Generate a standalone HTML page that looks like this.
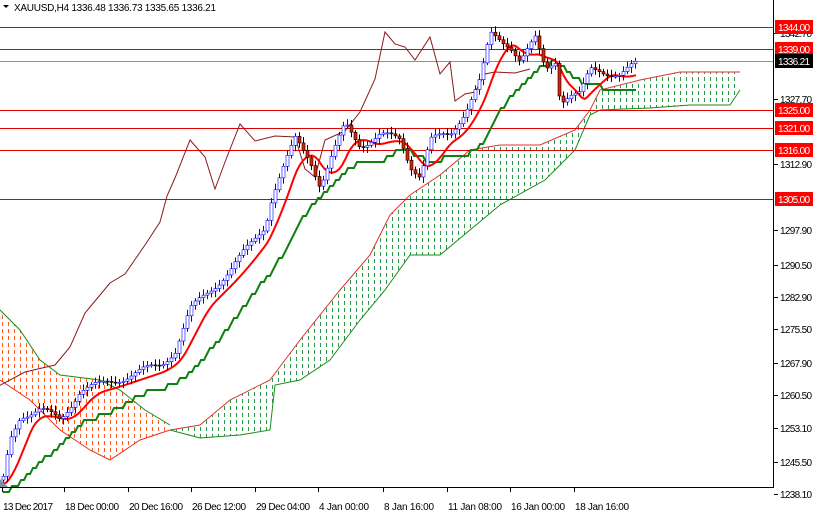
<!DOCTYPE html>
<html><head><meta charset="utf-8"><style>
body{margin:0;background:#fff;}
svg{display:block;font-family:"Liberation Sans",sans-serif;}
</style></head><body>
<svg id="s" width="814" height="514" xmlns="http://www.w3.org/2000/svg">
<defs>
<pattern id="pg" width="6" height="7" patternUnits="userSpaceOnUse"><line x1="2.5" y1="0" x2="2.5" y2="4" stroke="#2a9a4a" stroke-width="1"/></pattern>
<pattern id="po" width="6" height="7" patternUnits="userSpaceOnUse"><line x1="2.5" y1="0" x2="2.5" y2="4" stroke="#ff5a1a" stroke-width="1"/></pattern>
</defs>
<rect width="814" height="514" fill="#fff"/>
<g id="cloud"></g>
<g id="lines"></g>
<g id="candles"></g>
<line x1="773.5" y1="0" x2="773.5" y2="487" stroke="#000"/>
<line x1="0" y1="487.5" x2="774" y2="487.5" stroke="#000"/>
<g id="axis" font-size="10" fill="#000"></g>
<text x="14" y="11" font-size="10" textLength="202">XAUUSD,H4  1336.48 1336.73 1335.65 1336.21</text>
<path d="M3 5 L9 5 L6 8 Z" fill="#000"/>
<path d="M0 487 L8 487 L0 479Z" fill="#8090a0"/>
</svg>
<script>
var S=document.getElementById('s'),NS='http://www.w3.org/2000/svg';
function el(p,t,a,txt){var e=document.createElementNS(NS,t);for(var k in a)e.setAttribute(k,a[k]);if(txt)e.textContent=txt;document.getElementById(p).appendChild(e);return e;}
function pts(a){return a.map(function(p){return p.join(',')}).join(' ');}
var gu=[[170,430],[200,425],[230,400],[270,380],[300,340],[340,290],[370,255],[390,215],[410,195],[440,175],[470,150],[500,145],[540,145],[575,130],[590,110],[600,90],[640,80],[680,72],[740,72]];
var gl=[[740,90],[730,105],[690,105],[650,108],[600,110],[590,115],[575,150],[545,180],[500,205],[470,230],[440,255],[410,255],[385,290],[360,320],[330,360],[300,380],[275,385],[270,430],[240,435],[200,438],[170,430]];
el('cloud','polygon',{points:pts(gu.concat(gl)),fill:'url(#pg)'});
el('cloud','polyline',{points:pts(gu),fill:'none',stroke:'#e03030','stroke-width':1});
el('cloud','polyline',{points:pts(gl),fill:'none',stroke:'#1a8a1a','stroke-width':1});
var ou=[[0,310],[20,330],[40,360],[60,375],[100,380],[120,390],[145,410],[170,425]];
var ol=[[170,430],[140,440],[110,460],[90,450],[60,430],[30,400],[0,380]];
el('cloud','polygon',{points:pts(ou.concat(ol)),fill:'url(#po)'});
el('cloud','polyline',{points:pts(ou),fill:'none',stroke:'#1a8a1a','stroke-width':1});
el('cloud','polyline',{points:pts(ol),fill:'none',stroke:'#e03030','stroke-width':1});
[27,49,110,128,150,199].forEach(function(y){el('lines','line',{x1:0,y1:y+.5,x2:774,y2:y+.5,stroke:'#e00000'});});
el('lines','line',{x1:0,y1:61.5,x2:774,y2:61.5,stroke:'#909090'});
var P=[[3,480],[10,440],[20,415],[40,410],[60,420],[80,390],[100,385],[130,375],[160,365],[175,350],[190,310],[200,300],[215,285],[230,270],[250,245],[265,225],[272,195],[280,175],[295,140],[310,160],[320,185],[330,160],[345,125],[360,145],[380,135],[400,140],[410,165],[420,175],[430,140],[450,135],[465,110],[480,80],[490,35],[500,40],[510,45],[520,60],[535,40],[545,70],[555,60],[560,100],[570,95],[580,95],[590,70],[600,70],[620,75],[635,65]];
function at(x){for(var i=1;i<P.length;i++)if(x<=P[i][0]){var a=P[i-1],b=P[i];return a[1]+(b[1]-a[1])*(x-a[0])/(b[0]-a[0]);}return P[P.length-1][1];}
el('lines','polyline',{points:pts(P.map(function(p){return [p[0]-105,p[1]+((p[0]*7)%9-4)]}).filter(function(p){return p[0]>-10})),fill:'none',stroke:'#8b1a1a','stroke-width':1});
var t=[],k=[];
for(var x=3;x<=636;x+=3){var s=0,n=0;for(var j=x-25;j<=x;j+=3){s+=at(Math.max(3,j));n++;}t.push([x,s/n+4]);var s2=0,n2=0;for(var j=x-70;j<=x;j+=3){s2+=at(Math.max(3,j));n2++;}k.push([x,Math.round((s2/n2+12)/6)*6]);}
el('lines','polyline',{points:pts(k),fill:'none',stroke:'#108010','stroke-width':2});
el('lines','polyline',{points:pts(t),fill:'none',stroke:'#f00','stroke-width':2});
var prev=at(3);
for(var x=3;x<=636;x+=4){var c=at(x)+Math.sin(x*1.7)*4,o=prev,h=Math.min(o,c)-2-Math.abs(Math.sin(x))*4,l=Math.max(o,c)+2+Math.abs(Math.cos(x*1.3))*4;var up=c<o;
el('candles','line',{x1:x+.5,y1:h,x2:x+.5,y2:l,stroke:up?'#0000ff':'#000'});
el('candles','rect',{x:x-1,y:Math.min(o,c),width:3,height:Math.max(1,Math.abs(o-c)),fill:up?'#fff':'#e02000',stroke:up?'#0000ff':'#000','stroke-width':.6});prev=c;}
[['1342.70',33],['1327.70',99],['1312.90',164],['1297.90',230],['1290.50',265],['1282.90',297],['1275.50',329],['1267.90',363],['1260.50',395],['1253.10',428],['1245.50',462],['1238.10',494]].forEach(function(a){el('axis','line',{x1:774,y1:a[1]+.5,x2:778,y2:a[1]+.5,stroke:'#000'});el('axis','text',{x:780,y:a[1]+4,textLength:32},a[0]);});
[['1344.00',27],['1339.00',49],['1325.00',110],['1321.00',128],['1316.00',150],['1305.00',199]].forEach(function(a){el('axis','rect',{x:775,y:a[1]-7,width:38,height:14,fill:'#f00'});el('axis','text',{x:778,y:a[1]+4,fill:'#fff',textLength:32},a[0]);});
el('axis','rect',{x:775,y:54,width:38,height:14,fill:'#000'});el('axis','text',{x:778,y:65,fill:'#fff',textLength:32},'1336.21');
[['13 Dec 2017',2],['18 Dec 00:00',64],['20 Dec 16:00',128],['26 Dec 12:00',191],['29 Dec 04:00',255],['4 Jan 00:00',318],['8 Jan 16:00',383],['11 Jan 08:00',447],['16 Jan 00:00',510],['18 Jan 16:00',574]].forEach(function(a){el('axis','line',{x1:a[1]+.5,y1:487,x2:a[1]+.5,y2:492,stroke:'#000'});el('axis','text',{x:a[1]+1,y:510,textLength:a[0].length>11?54:(a[0].length==11?50:47)},a[0]);});
</script>
</body></html>
